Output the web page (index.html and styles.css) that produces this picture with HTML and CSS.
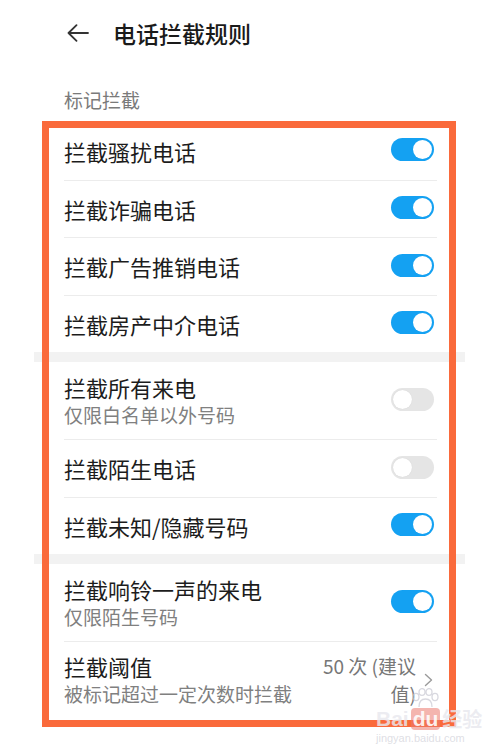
FILE: index.html
```html
<!DOCTYPE html>
<html lang="zh-CN">
<head>
<meta charset="utf-8">
<title>电话拦截规则</title>
<link rel="stylesheet" href="styles.css">
</head>
<body>
<div class="page">
  <header class="header">
    <svg class="back" width="22" height="18" viewBox="0 0 22 18" aria-hidden="true">
      <path d="M1.5 9 H21 M9.5 1.2 L1.5 9 L9.5 16.8" fill="none" stroke="#333" stroke-width="1.8" stroke-linecap="round" stroke-linejoin="round"/>
    </svg>
    <h1 class="title">电话拦截规则</h1>
  </header>

  <div class="section-label">标记拦截</div>

  <div class="list">
    <div class="group">
      <div class="row"><div class="text"><div class="row-title">拦截骚扰电话</div></div><span class="switch on"></span></div>
      <div class="row"><div class="text"><div class="row-title">拦截诈骗电话</div></div><span class="switch on"></span></div>
      <div class="row"><div class="text"><div class="row-title">拦截广告推销电话</div></div><span class="switch on"></span></div>
      <div class="row"><div class="text"><div class="row-title">拦截房产中介电话</div></div><span class="switch on"></span></div>
    </div>
    <div class="group">
      <div class="row tall"><div class="text"><div class="row-title">拦截所有来电</div><div class="row-sub">仅限白名单以外号码</div></div><span class="switch"></span></div>
      <div class="row"><div class="text"><div class="row-title">拦截陌生电话</div></div><span class="switch"></span></div>
      <div class="row"><div class="text"><div class="row-title">拦截未知/隐藏号码</div></div><span class="switch on"></span></div>
    </div>
    <div class="group">
      <div class="row tall"><div class="text"><div class="row-title">拦截响铃一声的来电</div><div class="row-sub">仅限陌生号码</div></div><span class="switch on"></span></div>
      <div class="row tall"><div class="text"><div class="row-title">拦截阈值</div><div class="row-sub">被标记超过一定次数时拦截</div></div>
        <div class="value">50 次 (建议值)</div>
        <svg class="chevron" width="9" height="14" viewBox="0 0 9 14" aria-hidden="true">
          <path d="M1.5 1.5 L7.5 7 L1.5 12.5" fill="none" stroke="#9a9a9a" stroke-width="1.4" stroke-linecap="round" stroke-linejoin="round"/>
        </svg>
      </div>
    </div>
  </div>

  <div class="highlight"></div>

  <div class="watermark">
    <svg class="paw" width="30" height="20" viewBox="0 0 30 20" aria-hidden="true">
      <g fill="none" stroke="rgba(200,200,210,0.7)" stroke-width="1.3">
        <ellipse cx="6" cy="9" rx="3" ry="3.6"/>
        <ellipse cx="12" cy="4" rx="3" ry="3.4"/>
        <ellipse cx="19" cy="4" rx="3" ry="3.4"/>
        <ellipse cx="25" cy="9" rx="3" ry="3.6"/>
        <path d="M9 19 C9 13 12 11 15.5 11 C19 11 22 13 22 19"/>
      </g>
    </svg>
    <div class="wm-main"><span class="wm-bai">Bai</span><span class="wm-du">du</span><span class="wm-jy">经验</span></div>
    <div class="wm-url">jingyan.baidu.com</div>
  </div>
</div>
</body>
</html>
```

FILE: styles.css
```css
* { box-sizing: border-box; }

html, body {
  margin: 0;
  padding: 0;
  background: #ffffff;
}

body {
  font-family: "Noto Sans CJK SC", "Noto Sans", sans-serif;
  color: #1c1c1c;
}

.page {
  position: relative;
  width: 500px;
  height: 752px;
  overflow: hidden;
  background: #ffffff;
}

.header {
  height: 66px;
  display: flex;
  align-items: center;
  gap: 24px;
  padding-left: 67px;
}

.back { display: block; flex: none; }

.title {
  margin: 0;
  font-size: 23px;
  font-weight: 500;
  line-height: 30px;
  color: #1a1a1a;
}

.section-label {
  height: 56px;
  padding: 21px 0 0 64px;
  font-size: 19px;
  line-height: 26px;
  color: #7a7a7a;
}

.list {
  margin: 0 35px 0 34px;
  background: #f2f2f2;
  display: flex;
  flex-direction: column;
  gap: 10px;
}

.group {
  background: #ffffff;
}

.row {
  height: 57.5px;
  margin: 0 28px 0 30px;
  padding-right: 3px;
  display: flex;
  align-items: center;
}

.row.tall { height: 77px; }

.row + .row { border-top: 1px solid #ececec; }

.text {
  flex: 1;
  min-width: 0;
}

.row-title {
  font-size: 22px;
  line-height: 28px;
  color: #1c1c1c;
}

.row-sub {
  font-size: 19px;
  line-height: 28px;
  color: #808080;
}

.switch {
  position: relative;
  flex: none;
  width: 43px;
  height: 23px;
  border-radius: 12px;
  background: #e5e5e5;
  margin-top: -2px;
}

.switch::after {
  content: "";
  position: absolute;
  top: 2px;
  left: 2px;
  width: 19px;
  height: 19px;
  border-radius: 50%;
  background: #ffffff;
  box-shadow: 0 0 1px rgba(0,0,0,0.12);
}

.switch.on { background: #14a1f2; }

.switch.on::after {
  left: 22px;
  box-shadow: none;
}

.value {
  flex: none;
  width: 98px;
  text-align: right;
  font-size: 19px;
  line-height: 28px;
  color: #777777;
  margin-right: 8px;
}

.chevron { display: block; flex: none; margin-right: 1px; }

.highlight {
  position: absolute;
  left: 42px;
  top: 121px;
  width: 414px;
  height: 606px;
  border: 7px solid #fa6a3b;
  pointer-events: none;
}

.watermark {
  position: absolute;
  left: 376px;
  top: 688px;
  width: 124px;
  display: flex;
  flex-direction: column;
  align-items: flex-start;
  pointer-events: none;
}

.paw { display: block; margin-left: 34px; }

.wm-main {
  display: flex;
  align-items: center;
  font-family: "Liberation Sans", sans-serif;
  font-weight: 700;
  font-size: 21px;
  line-height: 22px;
  color: rgba(232, 232, 238, 0.82);
}

.wm-du {
  margin-left: 2px;
  padding: 0 2px;
  border-radius: 4px;
  background: rgba(235, 120, 110, 0.55);
  color: rgba(255,255,255,0.9);
}

.wm-jy {
  margin-left: 2px;
  font-family: "Noto Sans CJK SC", sans-serif;
  font-size: 20px;
}

.wm-url {
  margin-top: 2px;
  font-family: "Liberation Sans", sans-serif;
  font-size: 11px;
  line-height: 13px;
  color: rgba(200, 200, 210, 0.6);
}
```
